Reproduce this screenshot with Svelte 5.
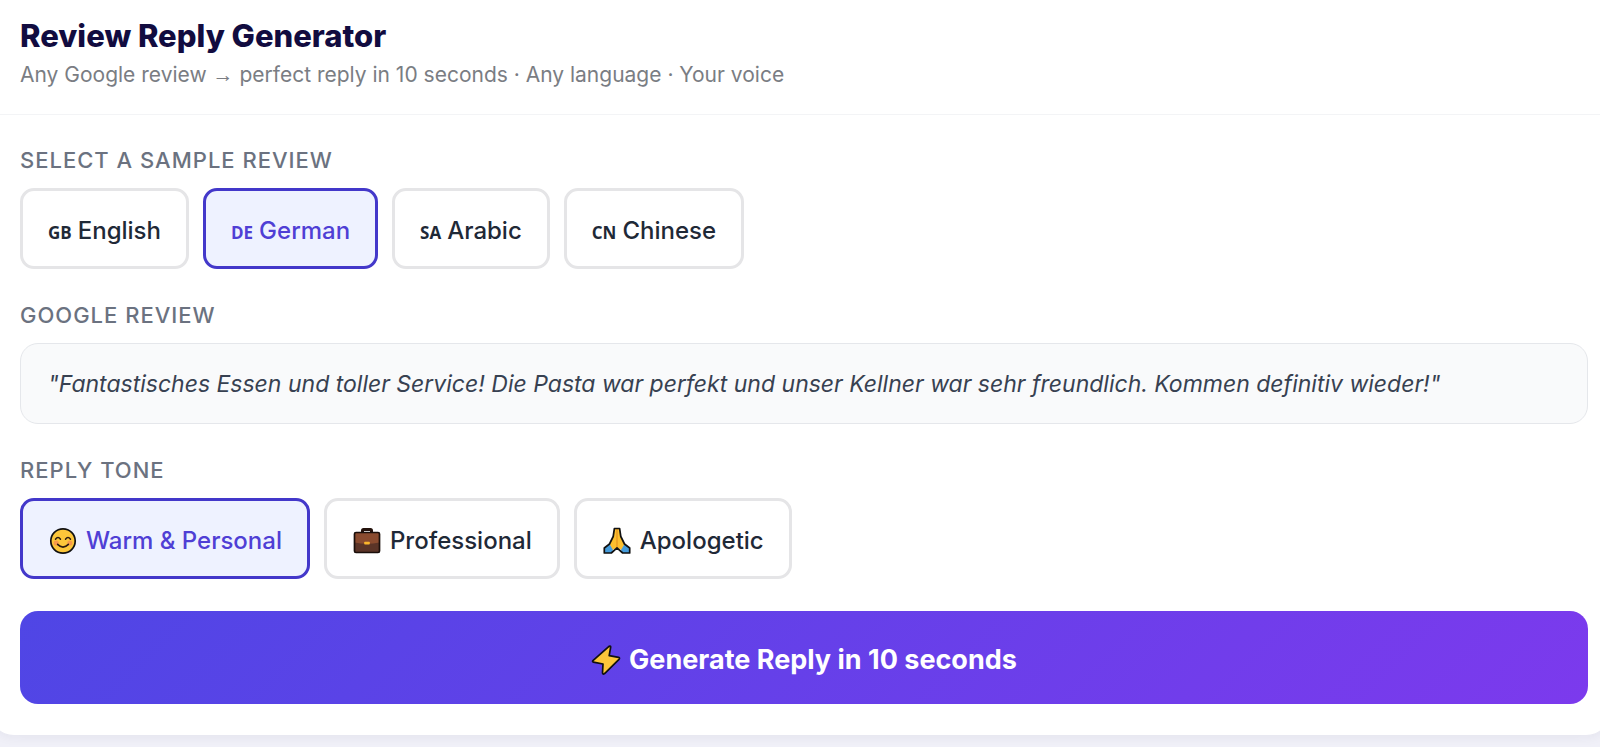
<script>
  const samples = [
    { code: 'GB', name: 'English', text: 'Amazing food and great service! The pasta was perfect and our waiter was very friendly. Will definitely come back!' },
    { code: 'DE', name: 'German', text: 'Fantastisches Essen und toller Service! Die Pasta war perfekt und unser Kellner war sehr freundlich. Kommen definitiv wieder!' },
    { code: 'SA', name: 'Arabic', text: 'طعام رائع وخدمة ممتازة! سنعود بالتأكيد!' },
    { code: 'CN', name: 'Chinese', text: '食物很棒，服务一流！我们一定会再来！' }
  ]
  const tones = [
    { id: 'warm', name: 'Warm & Personal' },
    { id: 'professional', name: 'Professional' },
    { id: 'apologetic', name: 'Apologetic' }
  ]

  let sample = samples[1]
  let tone = 'warm'
</script>

<main class="card">
  <header>
    <h1>Review Reply Generator</h1>
    <p>Any Google review <span class="arrow">→</span> perfect reply in 10 seconds · Any language · Your voice</p>
  </header>

  <div class="content">
    <section>
      <h2>Select a sample review</h2>
      <div class="options">
        {#each samples as s}
          <button class="option" class:active={sample === s} aria-pressed={sample === s} on:click={() => sample = s}>
            <span class="code">{s.code}</span>
            <span>{s.name}</span>
          </button>
        {/each}
      </div>
    </section>

    <section>
      <h2>Google review</h2>
      <blockquote>"{sample.text}"</blockquote>
    </section>

    <section>
      <h2>Reply tone</h2>
      <div class="options">
        {#each tones as t}
          <button class="option tone" class:active={tone === t.id} aria-pressed={tone === t.id} on:click={() => tone = t.id}>
            <svg class="icon" viewBox="0 0 30 30" aria-hidden="true">
              {#if t.id === 'warm'}
                <circle cx="15" cy="15" r="12.2" fill="#fcc63a" stroke="#111" stroke-width="1.7" />
                <circle cx="8.2" cy="17" r="2.6" fill="#f79a4b" />
                <circle cx="21.8" cy="17" r="2.6" fill="#f79a4b" />
                <path d="M7.5 13.2q2.5-3.4 5 0M17.5 13.2q2.5-3.4 5 0M9.6 18.4q5.4 5.4 10.8 0" fill="none" stroke="#2b1a10" stroke-width="1.5" stroke-linecap="round" />
              {:else if t.id === 'professional'}
                <path d="M10.5 7V4.5q0-1 1-1h7q1 0 1 1V7" fill="none" stroke="#24120c" stroke-width="3" />
                <rect x="2.5" y="6.5" width="25" height="20" rx="1.5" fill="#5b3427" />
                <path d="M2.5 8Q2.5 6.5 4 6.5h22Q27.5 6.5 27.5 8V16.5q-12.5 2.5-25 0z" fill="#8a4b2f" />
                <rect x="2.5" y="6.5" width="25" height="20" rx="1.5" fill="none" stroke="#1a0f0b" stroke-width="1.7" />
                <rect x="12.2" y="15.8" width="5.6" height="2.7" rx=".8" fill="#fbb62c" />
              {:else}
                <path d="M12.4 2.5h5.2l1.2 8 3.7 7.5-2.700 6L15 21.800l-4.800 2.200-2.700-6 3.700-7.500z" fill="#fcc02f" />
                <path d="M15 3v18.500" stroke="#e89a22" stroke-width="1.400" />
                <path d="M7.500 18L2.300 22v5h7l1.700-3zM22.500 18l5.200 4v5h-7L19 24z" fill="#459cdb" />
                <path d="M12.400 2.500h5.200l1.200 8 3.700 7.500 5.200 4v5h-7L15 21.800 9.300 27h-7v-5l5.200-4 3.700-7.500z" fill="none" stroke="#111" stroke-width="1.700" stroke-linejoin="round" />
              {/if}
            </svg>
            <span>{t.name}</span>
          </button>
        {/each}
      </div>
    </section>

    <button class="generate">
      <svg class="icon" viewBox="0 0 30 30" aria-hidden="true">
        <path d="M18 1.4Q20 .6 19.600 2.500L18.200 10.600L27.600 12.400Q29.200 13 28 14.400L13.600 28.600Q11.600 29.800 11.500 27.800L12 19L2.400 17.200Q.8 16.600 2.200 15.400z" fill="#fcc63a" stroke="#111" stroke-width="1.700" stroke-linejoin="round" />
      </svg>
      <span>Generate Reply in 10 seconds</span>
    </button>
  </div>
</main>

<style>
  :global(body) {
    margin: 0;
    background: #f0f0f8;
    overflow-x: hidden;
  }
  .card {
    margin: 0 -10px 12px;
    background: #fff;
    border-radius: 0 0 24px 24px;
    box-shadow: 0 2px 12px rgba(30, 27, 75, 0.06);
    font-family: Inter, sans-serif;
  }
  header {
    padding: 16px 22px 25px 30px;
    border-bottom: 1px solid #f3f4f6;
  }
  h1 {
    margin: 0;
    color: #120c40;
    font-size: 31px;
    font-weight: 800;
    line-height: 40px;
  }
  header p {
    margin: 5px 0 0;
    color: #7a7d83;
    font-size: 21px;
    line-height: 28px;
  }
  .arrow {
    font-family: "Liberation Sans", sans-serif;
  }
  .content {
    display: flex;
    flex-direction: column;
    gap: 32px;
    padding: 31px 22px 31px 30px;
  }
  h2 {
    margin: 0 0 14px;
    color: #6b7280;
    font-size: 22px;
    font-weight: 500;
    line-height: 28px;
    letter-spacing: 1px;
    text-transform: uppercase;
  }
  .options {
    display: flex;
    flex-wrap: wrap;
    gap: 14px;
  }
  button {
    font-family: inherit;
    cursor: pointer;
  }
  .option {
    display: flex;
    align-items: baseline;
    gap: 6px;
    padding: 24px 25px 20px;
    border: 3px solid #e5e5e7;
    border-radius: 14px;
    background: #fff;
    color: #1f2937;
    font-size: 24px;
    font-weight: 500;
    line-height: 31px;
  }
  .tone {
    align-items: center;
    gap: 8px;
  }
  .active {
    border-color: #4338ca;
    background: #eef2ff;
    color: #4f3fd5;
  }
  .code {
    font-family: "Open Sans", sans-serif;
    font-size: 17px;
    font-weight: 700;
    line-height: 20px;
  }
  .icon {
    width: 30px;
    height: 30px;
  }
  blockquote {
    margin: 0;
    padding: 25px 27px 23px;
    border: 1px solid #e5e7eb;
    border-radius: 18px;
    background: #f9fafb;
    color: #374151;
    font-size: 23px;
    font-style: italic;
    line-height: 31px;
  }
  .generate {
    display: flex;
    align-items: center;
    justify-content: center;
    gap: 8px;
    padding: 32px 30px 28px;
    border: 0;
    border-radius: 18px;
    background: linear-gradient(135deg, #4f46e5, #7c3aed);
    color: #fff;
    font-size: 27px;
    font-weight: 700;
    line-height: 33px;
  }
</style>
